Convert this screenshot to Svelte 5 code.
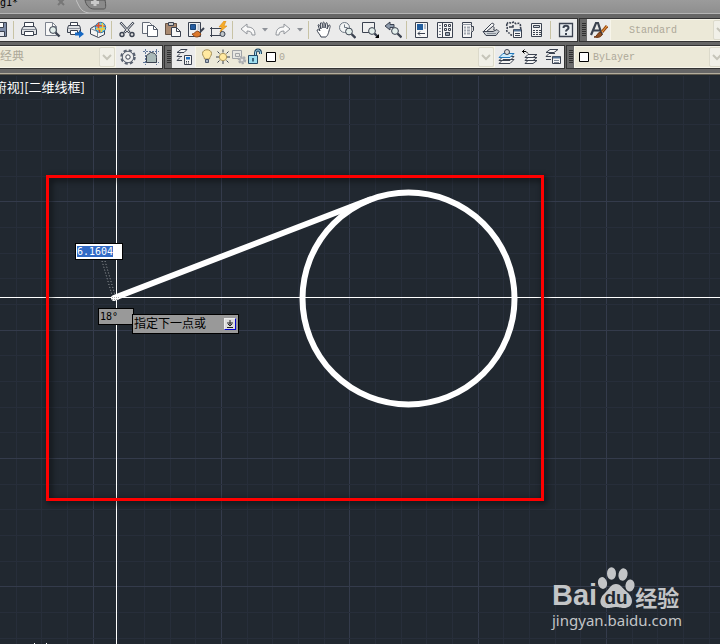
<script lang="ts">
    import { onMount } from "svelte";

    type Item = { kind: "button" | "drop" | "sep"; icon?: string; label?: string };

    const button = (icon: string, label: string): Item => ({ kind: "button", icon, label });
    const drop = (label: string): Item => ({ kind: "drop", icon: "drop", label });
    const sep: Item = { kind: "sep" };

    const lens = (x: number, y: number) =>
        `<path d="M${x + 2.5} ${y + 2.5}l4 4" stroke-width="2.4"/><circle cx="${x}" cy="${y}" r="3.4" fill="#e4efec"/>`;

    const icons: Record<string, string> = {
        save: `<path d="M2.500 1.500h13v14h-11l-2-2z" fill="#7d8ba6"/><path d="M5.500 1.500h7v5h-7z" fill="#fff"/><path d="M5.500 10.500h8v5h-8z" fill="#e4e7ee"/>`,
        print: `<path d="M4.500 6V1.500h9V6" fill="#fff"/><path d="M3.500 5.500h11l2 3v5h-15v-5z" fill="#dfe1e4"/><path d="M2 8.500h14" stroke="#8a909a"/><path d="M4.500 10.500h9v4h-9z" fill="#fff"/>`,
        preview: `<path d="M2.500 1.500h7l4 4v9h-11z" fill="#f7f7f7" stroke="#7d838e"/><path d="M9.500 1.500v4h4" stroke="#7d838e"/>${lens(10, 9)}`,
        plot: `<path d="M4.500 5V1.500h7V5" fill="#fff"/><path d="M2.500 4.500h11l1 3v4h-13v-4z" fill="#dfe1e4"/><path d="M2 7.500h12" stroke="#8a909a"/><path d="M4.500 9.500h7v4h-7z" fill="#fff"/><path d="M9 11.500h4V9l5 4-5 4v-2.500H9z" fill="#1769c4" stroke="none"/>`,
        publish: `<path d="M1.500 7.500l5-3 9 4v5l-6 3-8-3.500z" fill="#f4f4f4"/><path d="M1.500 7.500l7 3v6" stroke="#7d838e"/><circle cx="11.500" cy="6.500" r="5.200" fill="#66c6e8" stroke="#2c74a8"/><path d="M7 5c3-2 6 1 9 0M10 1.500c-2 4 0 7 1 10" stroke="#e3532e" stroke-width="1.600"/><path d="M13 2c2 4 0 7-1 9M7 8h9" stroke="#f3cf37" stroke-width="1.400"/>`,
        cut: `<path d="M2.500 1.500l9 10M15.500 1.500l-9 10" stroke-width="2.600"/><path d="M3 2l8 9M15 2l-8 9" stroke="#f2f2f2"/><circle cx="4" cy="13.500" r="2" fill="#ddd" stroke-width="1.400"/><circle cx="14" cy="13.500" r="2" fill="#ddd" stroke-width="1.400"/>`,
        copy: `<path d="M1.500 1.500h7l2 2v9h-9z" fill="#f8f8f8" stroke="#636a76"/><path d="M6.500 4.500h6l4 4v7h-10z" fill="#fff" stroke="#535b68"/><path d="M12.500 4.500v4h4" stroke="#535b68"/>`,
        paste: `<path d="M1.500 2.500h11v11h-11z" fill="#a98970" stroke="#655346"/><path d="M4.500 1.500h5v3h-5z" fill="#ccc"/><path d="M7.500 6.500h5l4 4v5h-9z" fill="#f7f7f7"/><path d="M12.500 6.500v4h4"/>`,
        match: `<path d="M1.500 1.500h12v14h-12z" fill="#eef0f2"/><path d="M3.500 3.500h5v5h-5z" fill="#245ba0" stroke="#194577"/><path d="M10.500 4h2M10.500 6h2M10.500 8h2" stroke="#8c98aa"/><path d="M17 7l-4 4" stroke="#3b4250" stroke-width="2"/><path d="M5 13c3 0 3-3 6-3l3 3c-2 4-6 4-9 0z" fill="#dc782b" stroke="#8f491b"/>`,
        block: `<path d="M1.500 7.500h10v7h-10z" fill="#eee"/><path d="M0 7.500h3M1.500 6v3M0 14.500h3M1.500 13v3M9 14.500h3"/><circle cx="12.500" cy="13" r="2.500" fill="#bfc5c8"/><path d="M14 0l-5 6h3l-2 5 7-6h-3l2-5z" fill="#f7ab27" stroke="#d88c1a" stroke-width=".6"/>`,
        undo: `<path d="M2 8l6-5v3c6 0 8 3 8 8h-3c0-3-2-4-5-4v3z" fill="#f8f8f8" stroke="#91959b"/>`,
        redo: `<path d="M16 8l-6-5v3c-6 0-8 3-8 8h3c0-3 2-4 5-4v3z" fill="#f8f8f8" stroke="#91959b"/>`,
        drop: `<path d="M6 7h6l-3 3.500z" fill="#8e9299" stroke="none"/>`,
        pan: `<path d="M6 16c-1-3-4-5-4-7 1-1 2 0 3 1L3 4c1-1 2 0 3 4l-.500-6c1-1 2 0 2.500 5V1.500c1-1 2 0 2 5.500l1-5c1-1 2 0 1 6l2-4c2 0 1 2 0 6s-2 5-3 6z" fill="#fff"/>`,
        zoomClock: `<circle cx="6.500" cy="6.500" r="5" fill="#f2f4f5" stroke="#6f7a86"/><path d="M6.500 3.500v3h3" stroke="#6f7a86"/>${lens(11, 10.5)}`,
        zoomWindow: `<path d="M1.500 1.500h12v10h-12z" fill="#f0f0f0"/>${lens(11, 10)}<path d="M18 13v4h-4z" fill="#000" stroke="none"/>`,
        zoomPrev: `<path d="M1 5l5-4v2.500h4v3H6V9z" fill="#8e9bac"/>${lens(11, 10)}`,
        properties: `<path d="M2.500 1.500h12v15h-12z" fill="#f6f6f6"/><path d="M4 3h6v6H4z" fill="#215d9e" stroke="none"/><path d="M11 3h2v5h-2z" fill="#b8bec7" stroke="none"/><path d="M5 12.500h7M7 10.500l-2 2 2 2"/>`,
        design: `<path d="M1.500 1.500h15v15h-15zM6.500 1.500v15" fill="#f6f6f6"/><path d="M3 4.500h2M3 7.500h2M3 10.500h2M3 13.500h2" stroke="#7c8491"/><path d="M8.500 3.500h2v2h-2zM12.500 3.500h2v2h-2zM8.500 7.500h2v2h-2zM12.500 7.500h2v2h-2z"/><path d="M9.500 11.500h4v3h-4z" fill="#9aa5b2"/>`,
        palette: `<path d="M3.500 1.500h9v15h-9z" fill="#f5f5f5"/><path d="M3.500 3.500h9" stroke="#9299a4"/><path d="M12.500 5.500h2v4l-2 2" fill="#ddd"/><path d="M5 6.500h2M8 6.500h3M5 9.500h2M8 9.500h3M5 12.500h2M8 12.500h3" stroke="#a2a8b1" stroke-width="2"/>`,
        sheets: `<path d="M1.500 10.500l8-8c2-1 3 1 2 2l-6 6z" fill="#f5f5f5"/><path d="M4.500 10.500l6-5c2 0 2 2 1 3l4 2" fill="#ddd"/><path d="M1 10.500h10l4-2 2 2-3 4H4z" fill="#cbd0d5"/><path d="M5 12.500h9" stroke="#888f99"/>`,
        markup: `<path d="M2 3c1-3 3-1 4-1s3-2 4 0 4-1 5 1 0 3 1 5M2 3c-1 2 1 3 0 5s1 4 2 4 1 3 5 2" stroke-dasharray="2 1" stroke-width="1.600"/><path d="M4 6h4V4" stroke-width="1.500"/><path d="M8.500 8.500h8v8h-8z" fill="#f7f7f7"/><path d="M9 9.500h7" stroke="#547396" stroke-width="2"/><path d="M10 12.500h5M10 14.500h5"/>`,
        calc: `<path d="M3.500 2.500h10v13h-10z" fill="#f3f3f3"/><path d="M5.500 4.500h6v2h-6z" fill="#cfd4da"/><path d="M5 9.500h8M5 11.500h8M5 13.500h8" stroke-dasharray="2 1"/>`,
        help: `<path d="M2.500 2.500h13v13h-13z" fill="#e9edf0" stroke-width="1.300"/><path d="M6.500 7c0-3 5-3 5 0 0 1.500-2.500 1.500-2.500 3.500M9 12v2" stroke-width="2"/>`,
        style: `<path d="M1 14L6 2h2l4 12M3.500 9.500h7" stroke-width="2.200"/><path d="M17 5l-5 6" stroke="#9c4a15" stroke-width="3"/><path d="M17 5l-5 6" stroke="#f0a94c"/><path d="M4 16c3 0 3-4 6-5l2 2c0 3-4 4-8 3z" fill="#8e4d22" stroke="#6a3413"/>`,
        gear: `<circle cx="9" cy="9" r="6.500" stroke="#596170" stroke-width="2.500" stroke-dasharray="3 2.100"/><circle cx="9" cy="9" r="5.700" fill="#eee" stroke="#596170"/><circle cx="9" cy="9" r="2.200" fill="#fff"/>`,
        workspace: `<path d="M3.500 1v16M14.500 1v16M1 3.500h16M1 14.500h16" stroke="#60779a" stroke-dasharray="2 1"/><path d="M4.500 14.500v-7l4-3c4 0 6 2 6 5v5z" fill="#a9b9b8"/>`,
        layerProps: `<path d="M6 1.500h6l-3 3H2zM2 8.500h5M2 12.500h5M2 8.500l3-3M2 12.500l3-3" fill="#f6f6f6"/><path d="M9.500 7.500h7v9h-7z" fill="#f4f4f4"/><path d="M11 9h4v2.500h-4z" fill="#1e6fc0" stroke="none"/><path d="M11 13.500h4M11 15h4" stroke-dasharray="1 1"/>`,
        layerCurrent: `<path d="M5 11.500h11l-4 4H1zM5 8.500h11l-4 4H1z" fill="#f5f5f5"/><path d="M5 5.500h11l-4 4H1z" fill="#cceafa" stroke="#2076ba"/><circle cx="9" cy="4" r="2.500" fill="#ddd"/>`,
        layerPrev: `<path d="M7 12.500h9l-4 3H4zM7 9.500h9l-4 3H4zM7 6.500h9l-4 3H4z" fill="#f5f5f5"/><path d="M1 3.500h4l2 2M3.500 1.500l-2 2 2 2" stroke="#000"/>`,
        layerStates: `<path d="M6 1.500h8l-4 3H2zM2 8.500h5M2 11.500h5M2 8.500l3-3h6" fill="#f5f5f5"/><path d="M8.500 8.500h8v7h-8z" fill="#f4f4f4"/><path d="M9 9.500h7" stroke="#547396" stroke-width="2"/><path d="M10 12.500h5M10 14.500h5" stroke="#7d8896"/>`,
        bulb: `<path d="M6.500 11c0-2-2-3-2-5.500 0-5 9-5 9 0C13.500 8 11.500 9 11.500 11z" fill="#ffe9a0" stroke="#a58f58"/><path d="M7.500 11.500h3v3h-3z" fill="#aab4c0" stroke="#4f5b6e"/>`,
        sun: `<path d="M9 1.500v3M9 13v3M2 9h3M13 9h3M3.500 3.500l2 2M12.500 12.500l2 2M14.500 3.500l-2 2M5.500 12.500l-2 2"/><circle cx="9" cy="9" r="3.700" fill="#ffe9a0" stroke="#b09a60"/>`,
        viewport: `<path d="M2.500 2.500h9v8h-9z" fill="#e7e7e2" stroke="#a1a4a7"/><path d="M5.500 5.500h4v3h-4z" stroke="#a1a4a7"/><circle cx="12" cy="12" r="3" fill="#bbb" stroke="#aaadb0" stroke-width="2.500" stroke-dasharray="2 1"/><circle cx="12" cy="12" r="1" fill="#eee" stroke="none"/>`,
        lock: `<path d="M9.500 8V5c0-4 5-4 5 0v1" stroke="#244a66" stroke-width="3"/><path d="M9.500 8V5c0-4 5-4 5 0v1" stroke="#a5dcf0"/><path d="M2.500 7.500h9v8h-9z" fill="#9edff0" stroke="#244a66"/><path d="M7 10v3.500" stroke="#183b55" stroke-width="1.500"/>`,
        swatch: `<path d="M4.500 4.500h9v9h-9z" fill="#fff" stroke="#000"/>`,
    };

    const standardItems: Item[] = [
        button("save", "Save"),
        sep,
        button("print", "Plot"),
        button("preview", "Plot preview"),
        button("plot", "Publish"),
        button("publish", "3D DWF"),
        sep,
        button("cut", "Cut"),
        button("copy", "Copy"),
        button("paste", "Paste"),
        button("match", "Match properties"),
        button("block", "Block editor"),
        sep,
        button("undo", "Undo"),
        drop("Undo list"),
        button("redo", "Redo"),
        drop("Redo list"),
        sep,
        button("pan", "Pan"),
        button("zoomClock", "Zoom realtime"),
        button("zoomWindow", "Zoom window"),
        button("zoomPrev", "Zoom previous"),
        sep,
        button("properties", "Properties"),
        button("design", "DesignCenter"),
        button("palette", "Tool palettes"),
        button("sheets", "Sheet set manager"),
        button("markup", "Markup set manager"),
        button("calc", "QuickCalc"),
        sep,
        button("help", "Help"),
    ];

    const layerTools = [
        button("layerCurrent", "Make object's layer current"),
        button("layerPrev", "Layer previous"),
        button("layerStates", "Layer states manager"),
    ];

    // every fifth grid line is a major one
    const step = 25.66;
    const columns = Array.from({ length: 110 }, (_, i) => ({
        at: Math.floor(93.3 + (i - 3) * step) + 0.5,
        major: (i - 3) % 5 === 0,
    }));
    const rows = Array.from({ length: 70 }, (_, i) => ({
        at: Math.floor(126.8 + (i - 4) * step) + 0.5,
        major: (i - 4) % 5 === 0,
    }));

    let distance = $state("6.1604");
    let distanceInput: HTMLInputElement;

    onMount(() => {
        distanceInput.focus();
        distanceInput.select();
    });
</script>

{#snippet glyph(name: string)}
    <svg class="icon" viewBox="0 0 18 18" fill="none" stroke="#3b4250" aria-hidden="true">
        {@html icons[name]}
    </svg>
{/snippet}

{#snippet tool(item: Item)}
    {#if item.kind === "sep"}
        <span class="sep"></span>
    {:else}
        <button class="tool" class:narrow={item.kind === "drop"} aria-label={item.label}>
            {@render glyph(item.icon ?? "")}
        </button>
    {/if}
{/snippet}

{#snippet arrow()}
    <span class="arrow" aria-hidden="true">
        <svg viewBox="0 0 10 8"><path d="M1 2l4 4 4-4" fill="none" stroke="#c6c5ba" stroke-width="2" /></svg>
    </span>
{/snippet}

<div class="app">
    <header class="titlebar">
        <span class="doc">g1*</span>
        <button class="close" aria-label="Close drawing">
            <svg viewBox="0 0 8 8"><path d="M1 -1l6 6M7 -1L1 5" stroke="#777" stroke-width="2" /></svg>
        </button>
        <button class="new-tab" aria-label="New drawing">
            <svg viewBox="0 0 34 14">
                <path d="M0 0C3 5 4 12 13 13H34" fill="none" stroke="#c4c4c4" />
                <path d="M9 0c1 5 4 9 9 9h10c2 0 2-4 1-9z" fill="#8a8a8a" stroke="#555" />
                <path d="M19 -1v7M15 2.500h8" stroke="#c9c9c9" stroke-width="3" />
            </svg>
        </button>
    </header>

    <div class="toolbars">
        <div class="row">
            <div class="toolbar standard">
                {#each standardItems as item}
                    {@render tool(item)}
                {/each}
            </div>
            <div class="toolbar styles">
                <span class="grip"></span>
                {@render tool(button("style", "Text style"))}
                <label class="combo text-style">
                    <select aria-label="Text style"><option>Standard</option></select>
                    {@render arrow()}
                </label>
            </div>
        </div>

        <div class="row">
            <div class="toolbar workspace">
                <label class="combo">
                    <select aria-label="Workspace"><option>经典</option></select>
                    {@render arrow()}
                </label>
                {@render tool(button("gear", "Workspace settings"))}
                {@render tool(button("workspace", "My workspace"))}
            </div>
            <div class="toolbar layers">
                <span class="grip"></span>
                {@render tool(button("layerProps", "Layer properties"))}
                <label class="combo">
                    {#each ["bulb", "sun", "viewport", "lock", "swatch"] as name}
                        <span class="state">{@render glyph(name)}</span>
                    {/each}
                    <select aria-label="Layer"><option>0</option></select>
                    {@render arrow()}
                </label>
                {#each layerTools as item}
                    {@render tool(item)}
                {/each}
            </div>
            <div class="toolbar color">
                <span class="grip"></span>
                <label class="combo">
                    <span class="state">{@render glyph("swatch")}</span>
                    <select aria-label="Color"><option>ByLayer</option></select>
                    {@render arrow()}
                </label>
            </div>
        </div>
    </div>

    <main class="canvas">
        <svg class="drawing" aria-label="Model space">
            {#each columns as line}
                <line class="grid" class:major={line.major} x1={line.at} x2={line.at} y1="1" y2="100%" />
            {/each}
            {#each rows as line}
                <line class="grid" class:major={line.major} x1="0" x2="100%" y1={line.at} y2={line.at} />
            {/each}

            <line class="cross" x1="116.5" x2="116.5" y1="0" y2="100%" />
            <line class="cross" x1="0" x2="100%" y1="222.5" y2="222.5" />

            <circle class="stroke" cx="408.5" cy="223.5" r="106" />
            <path class="stroke" d="M114 223L370 124.500" />
            <path class="track" d="M102 186l10 34M105 186l10 34" />
            <path class="snap" d="M112 222.500h8M112 224.500h8" />
            <path d="M34 568h1v1h-1zM46 568h1v1h-1z" fill="#fff" />

            <rect class="frame" x="47.5" y="101.5" width="495" height="323" />
        </svg>

        <div class="view-label">俯视][二维线框]</div>

        <input class="distance" aria-label="Distance" bind:value={distance} bind:this={distanceInput} />
        <output class="tip angle">18°</output>
        <div class="tip prompt">
            <span>指定下一点或</span>
            <button aria-label="Options">
                <svg viewBox="0 0 8 8"><path d="M4 0v6M1 3h6M2 4l2 2 2-2M1 7.500h6" fill="none" stroke="#222" /></svg>
            </button>
        </div>

        <div class="watermark">
            <div class="brand">
                <span class="latin">Bai</span>
                <svg class="paw" viewBox="0 0 38 42">
                    <ellipse cx="5.500" cy="16" rx="4.500" ry="6" transform="rotate(-12 5.500 16)" />
                    <ellipse cx="14.500" cy="6.500" rx="4.500" ry="6.200" />
                    <ellipse cx="26" cy="7.500" rx="4.500" ry="6.200" transform="rotate(12 26 7.500)" />
                    <ellipse cx="33" cy="18.500" rx="4.500" ry="6" transform="rotate(8 33 18.500)" />
                    <path d="M19 17c5 0 7 5 11 8 8 7 6 16-3 16-4 0-5-1-8-1s-4 1-8 1C2 41 1 32 8 26c4-4 6-9 11-9z" />
                    <text x="19" y="37" text-anchor="middle">du</text>
                </svg>
                <span class="han">经验</span>
            </div>
            <div class="url">jingyan.baidu.com</div>
        </div>
    </main>
</div>

<style>
    :global(body) {
        margin: 0;
    }

    .app {
        display: flex;
        flex-direction: column;
        min-height: 100vh;
        overflow: hidden;
        background: #212830;
        font-family: "Liberation Mono", "Noto Sans CJK SC", monospace;
        font-size: 10px;
    }

    button,
    select,
    input {
        margin: 0;
        padding: 0;
        border: 0;
        border-radius: 0;
        background: none;
        font: inherit;
    }

    .titlebar {
        display: flex;
        height: 14px;
        box-sizing: border-box;
        border-bottom: 1px solid #b4b4b4;
        background: linear-gradient(#9b9b9b, #8f8f8f);
        overflow: hidden;
    }

    .doc {
        width: 18px;
        color: #000;
        font-family: "DejaVu Sans Mono", monospace;
        line-height: 6px;
    }

    .close {
        display: flex;
        width: 8px;
        height: 6px;
        margin-left: 39px;
    }

    .close svg {
        width: 8px;
        height: 8px;
    }

    .new-tab {
        display: flex;
        height: 14px;
        margin-left: 11px;
    }

    .new-tab svg {
        width: 34px;
        height: 14px;
    }

    .toolbars {
        display: flex;
        flex-direction: column;
        gap: 3px;
        padding: 4px 0;
        border-bottom: 1px solid #b3ad9d;
        background: #666;
        box-shadow: 0 1px #5d594e;
        margin-bottom: 1px;
    }

    .row {
        display: flex;
        gap: 2px;
        height: 24px;
    }

    .toolbar {
        display: flex;
        align-items: stretch;
        box-sizing: border-box;
        border-top: 1px solid #333;
        border-bottom: 1px solid #333;
        background: #ebebeb;
        box-shadow: 1px 0 #333;
        overflow: hidden;
    }

    .standard {
        flex: none;
    }

    .standard > :global(:first-child) {
        margin-left: -12px;
    }

    .styles {
        flex: 1;
    }

    .workspace {
        flex: 0 0 162px;
    }

    .layers {
        flex: 1;
        min-width: 300px;
    }

    .color {
        flex: 0 0 154px;
    }

    .tool {
        display: flex;
        flex: 0 0 23px;
        align-items: center;
        justify-content: center;
        min-width: 0;
    }

    .narrow {
        flex-basis: 12px;
    }

    .icon {
        display: block;
        flex: none;
        width: 18px;
        height: 18px;
    }

    .sep {
        flex: none;
        width: 1px;
        margin: 2px 3px 2px 2px;
        background: #c8c3a5;
    }

    .grip {
        flex: none;
        width: 8px;
        background:
            repeating-linear-gradient(#2f2f2f 0 1px, transparent 1px 2px) 2px 4px / 4px 14px no-repeat,
            #6a6a6a;
        border-left: 1px solid #333;
        box-sizing: border-box;
    }

    .combo {
        display: flex;
        flex: 1;
        align-items: center;
        min-width: 0;
        border: 1px solid #f7f5ea;
        background: #ece9d8;
        color: #aca899;
    }

    .combo select {
        flex: 1;
        min-width: 0;
        height: 20px;
        appearance: none;
        color: inherit;
    }

    .workspace .combo {
        border-left: 0;
    }

    .workspace select {
        font-size: 12px;
    }

    .text-style {
        flex: 1 0 118px;
    }

    .text-style select {
        padding-left: 18px;
    }

    .color .combo {
        flex: 1 0 150px;
    }

    .color .state {
        width: 18px;
    }

    .state {
        display: flex;
        flex: none;
        justify-content: center;
        width: 16px;
    }

    .layers .combo {
        padding-left: 3px;
    }

    .arrow {
        display: flex;
        flex: none;
        align-items: center;
        justify-content: center;
        width: 14px;
        align-self: stretch;
        border: 1px solid #dcdacb;
        border-radius: 2px;
        background: #f1f0e8;
        pointer-events: none;
    }

    .arrow svg {
        width: 10px;
        height: 8px;
    }

    .canvas {
        position: relative;
        flex: 1;
        min-height: 569px;
        overflow: hidden;
        font-family: "DejaVu Sans Mono", "Noto Sans CJK SC", monospace;
    }

    .drawing {
        position: absolute;
        inset: 0;
        width: 100%;
        height: 100%;
    }

    .grid {
        stroke: #272e3a;
    }

    .grid.major {
        stroke: #343b4b;
    }

    .cross {
        stroke: #fff;
    }

    .stroke {
        fill: none;
        stroke: #fff;
        stroke-width: 6;
        stroke-linecap: round;
    }

    .track {
        fill: none;
        stroke: #9a9da1;
        stroke-dasharray: 1 2;
    }

    .snap {
        stroke: #aaa;
        stroke-dasharray: 1 1;
    }

    .frame {
        fill: none;
        stroke: #f00;
        stroke-width: 3;
        filter: drop-shadow(2px 2px 3px rgba(0, 0, 0, 0.8));
    }

    .view-label {
        position: absolute;
        top: 3px;
        right: calc(100% - 85px);
        color: #fff;
        font-family: "Noto Sans CJK SC", sans-serif;
        font-size: 13px;
        line-height: 18px;
        white-space: nowrap;
    }

    .distance {
        position: absolute;
        top: 168px;
        left: 75px;
        box-sizing: border-box;
        width: 48px;
        height: 17px;
        padding-left: 1px;
        border: 1px solid #000;
        background: #fff;
        color: #000;
        outline: none;
    }

    .distance::selection {
        background: #316ac5;
        color: #fff;
    }

    .tip {
        position: absolute;
        box-sizing: border-box;
        border: 1px solid #000;
        background: #999;
        color: #000;
    }

    .angle {
        top: 233px;
        left: 98px;
        width: 36px;
        height: 17px;
        padding-left: 1px;
        line-height: 15px;
    }

    .prompt {
        display: flex;
        align-items: center;
        justify-content: space-between;
        top: 239px;
        left: 132px;
        width: 107px;
        height: 20px;
        padding: 0 2px 0 1px;
        font-size: 12px;
        line-height: 16px;
        white-space: nowrap;
    }

    .prompt button {
        display: flex;
        align-items: center;
        justify-content: center;
        box-sizing: border-box;
        width: 12px;
        height: 12px;
        border: 1px solid #eee;
        border-right-color: #00c;
        border-bottom-color: #00c;
        background: #ddd;
    }

    .prompt svg {
        width: 8px;
        height: 8px;
    }

    .watermark {
        position: absolute;
        right: 40px;
        bottom: 13px;
        width: 128px;
        color: #c3c5c7;
    }

    .brand {
        display: flex;
        align-items: flex-end;
        height: 42px;
        font-weight: 700;
        white-space: nowrap;
    }

    .latin {
        font-family: "Liberation Sans", Arial, sans-serif;
        font-size: 29px;
        line-height: 28px;
    }

    .paw {
        flex: none;
        width: 38px;
        height: 42px;
        fill: #c3c5c7;
    }

    .paw text {
        fill: #212830;
        font-family: "Liberation Sans", Arial, sans-serif;
        font-size: 19px;
        font-weight: 700;
    }

    .han {
        font-family: "Noto Sans CJK SC", sans-serif;
        font-size: 22px;
        line-height: 26px;
    }

    .url {
        font-family: "Noto Sans", sans-serif;
        font-size: 15px;
        line-height: 22px;
        white-space: nowrap;
    }
</style>
